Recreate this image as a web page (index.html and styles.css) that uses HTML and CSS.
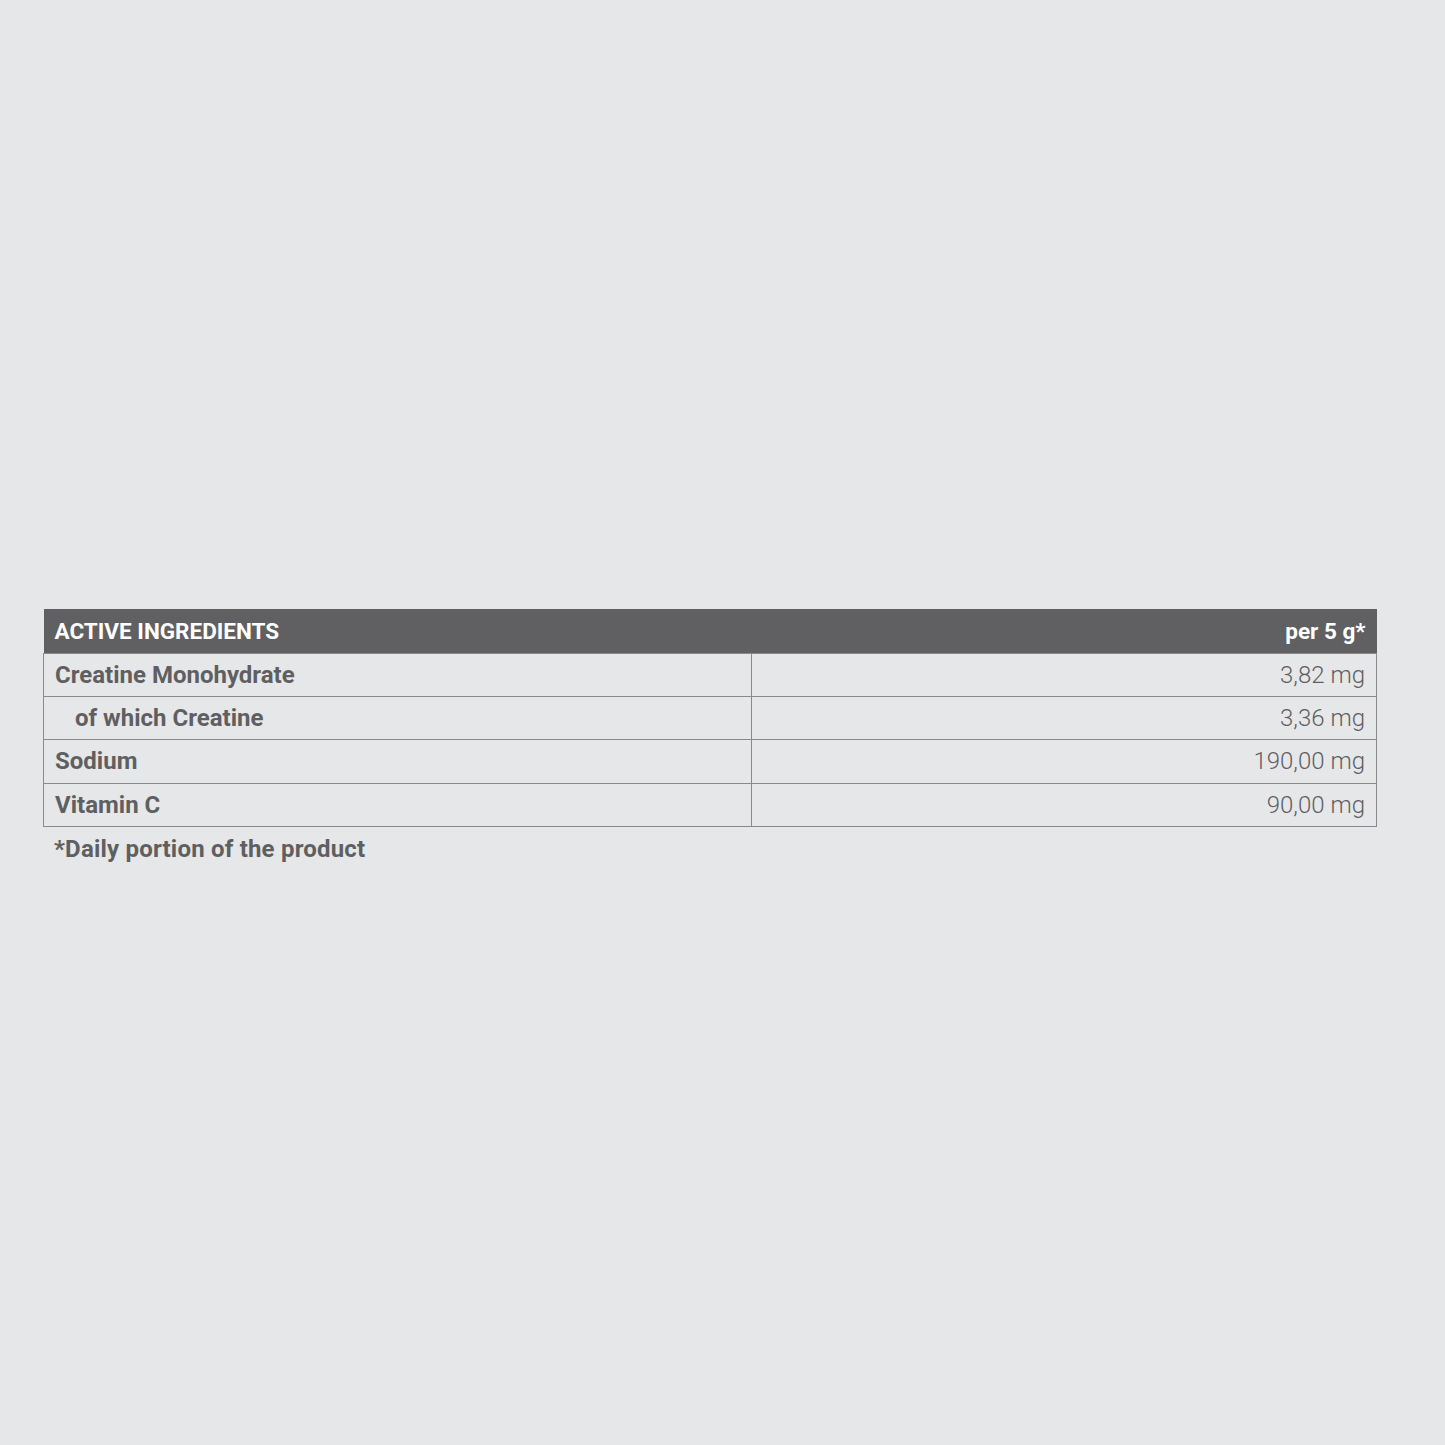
FILE: index.html
```html
<!DOCTYPE html>
<html>
<head>
<meta charset="utf-8">
<link rel="stylesheet" href="styles.css">
</head>
<body>
<div class="page">
  <table class="ingredients">
    <colgroup>
      <col class="col-name">
      <col class="col-value">
    </colgroup>
    <thead>
      <tr>
        <th class="head-name">ACTIVE INGREDIENTS</th>
        <th class="head-value">per 5 g*</th>
      </tr>
    </thead>
    <tbody>
      <tr><td class="name">Creatine Monohydrate</td><td class="value">3,82 mg</td></tr>
      <tr><td class="name sub">of which Creatine</td><td class="value">3,36 mg</td></tr>
      <tr><td class="name">Sodium</td><td class="value">190,00 mg</td></tr>
      <tr><td class="name">Vitamin C</td><td class="value">90,00 mg</td></tr>
    </tbody>
  </table>
  <p class="note">*Daily portion of the product</p>
</div>
</body>
</html>
```
FILE: styles.css
```css
html, body {
  margin: 0;
  padding: 0;
  background: #e6e7e9;
}
body {
  font-family: Roboto, "Liberation Sans", sans-serif;
  color: #5f5f61;
}
.page {
  padding: 609px 68px 0 43px;
}
.ingredients {
  width: 1334px;
  border-collapse: collapse;
  table-layout: fixed;
}
.col-name { width: 708px; }
.ingredients th {
  background: #606062;
  color: #ffffff;
  font-weight: 700;
  font-size: 22.5px;
  height: 44px;
  padding: 0 11px;
  letter-spacing: 0;
}
.head-name { text-align: left; }
.head-value { text-align: right; }
.ingredients td {
  border: 1px solid #8a8a8c;
  height: 42.2px;
  padding: 0 11px;
  font-size: 24px;
  letter-spacing: 0;
}
.ingredients td.name {
  font-weight: 700;
  text-align: left;
}
.ingredients td.sub {
  padding-left: 31px;
}
.ingredients td.value {
  font-weight: 300;
  text-align: right;
}
.note {
  margin: 0;
  padding: 8px 11px;
  font-size: 24px;
  font-weight: 700;
  letter-spacing: 0.2px;
}
```
